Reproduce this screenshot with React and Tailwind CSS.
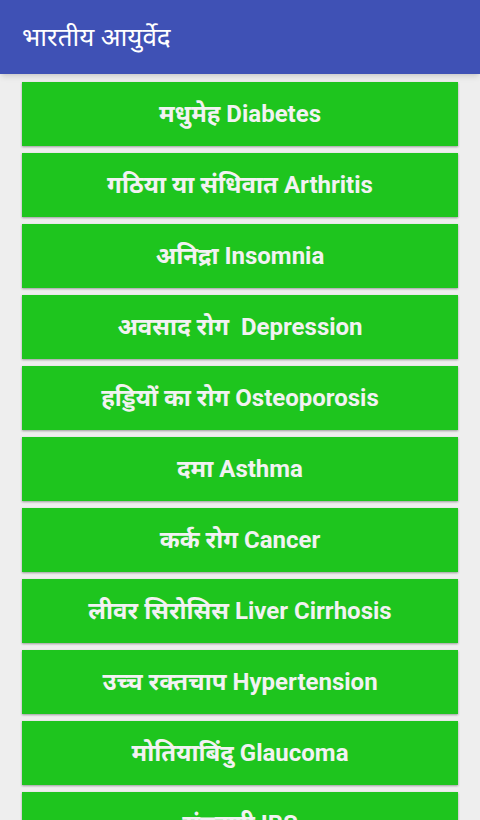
const items = [
  "मधुमेह Diabetes",
  "गठिया या संधिवात Arthritis",
  "अनिद्रा Insomnia",
  "अवसाद रोग  Depression",
  "हड्डियों का रोग Osteoporosis",
  "दमा Asthma",
  "कर्क रोग Cancer",
  "लीवर सिरोसिस Liver Cirrhosis",
  "उच्च रक्तचाप Hypertension",
  "मोतियाबिंदु Glaucoma",
  "संग्रहणी IBS",
];

export default function App() {
  return (
    <div
      className="w-[480px] h-[820px] overflow-hidden bg-[#eeeeee]"
      style={{ fontFamily: "Roboto, 'Noto Sans', sans-serif" }}
    >
      {/* App bar */}
      <div className="h-[74px] bg-[#3f51b5] flex items-center px-[22px] shadow-md relative z-10">
        <h1 className="text-white text-[26px] leading-none">भारतीय आयुर्वेद</h1>
      </div>

      {/* Disease list */}
      <div className="flex flex-col gap-[7px] pt-[8px] px-[22px]">
        {items.map((item) => (
          <button
            key={item}
            className="h-[64px] w-full bg-[#1ec51e] text-[#f2f2f2] font-bold text-[24px] whitespace-pre flex items-center justify-center shadow-[0_1px_2px_rgba(0,0,0,0.35)]"
          >
            {item}
          </button>
        ))}
      </div>
    </div>
  );
}
